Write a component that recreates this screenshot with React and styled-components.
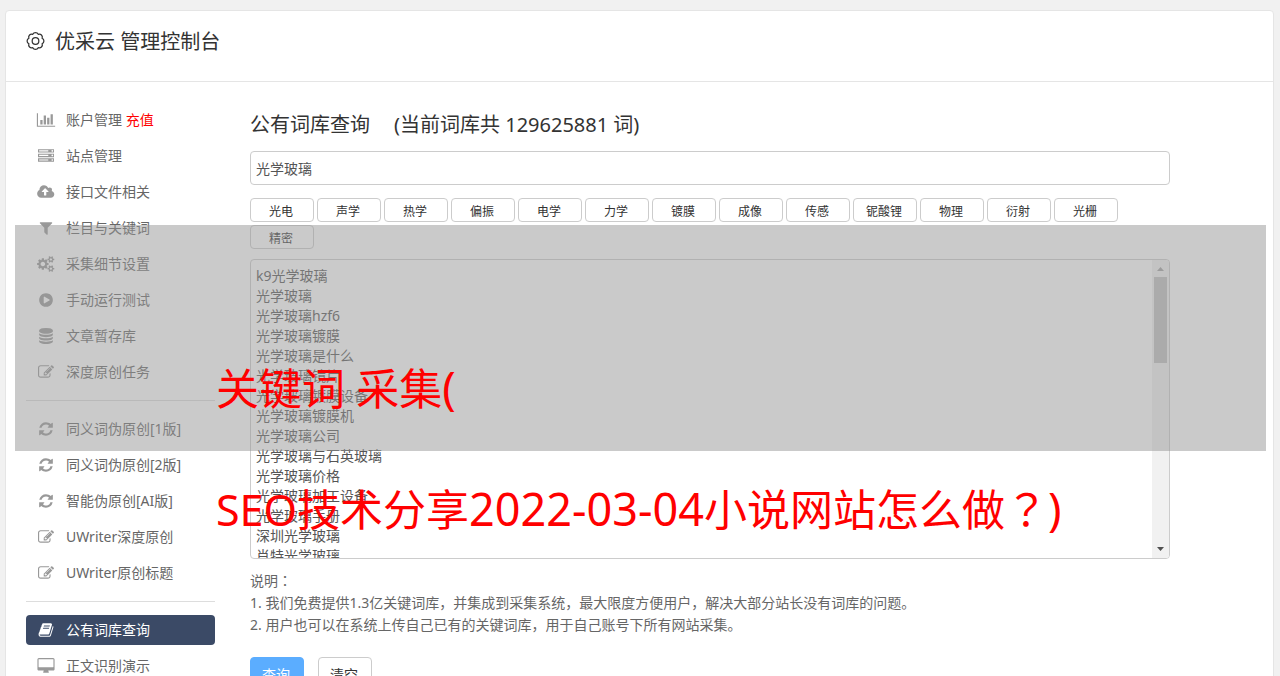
import React, { Fragment } from 'react';
import styled, { createGlobalStyle, css } from 'styled-components';

const FONT = '"Noto Sans", "Noto Sans CJK SC", sans-serif';
const BORDER = '#ccc';

const GlobalStyle = createGlobalStyle`
  * {
    box-sizing: border-box;
  }

  html {
    scrollbar-width: none;
  }

  body {
    margin: 0;
    background: #f1f1f1;
    color: #666;
    font-family: ${FONT};
    font-size: 14px;
  }
`;

const ICONS = {
  chart: {
    box: '0 0 2048 1792',
    d: 'M640 896v512h-256v-512h256zm384-512v1024h-256v-1024h256zm1024 1152v128h-2048v-1536h128v1408h1920zm-640-896v768h-256v-768h256zm384-384v1152h-256v-1152h256z',
  },
  server: {
    box: '0 0 1792 1792',
    d: 'M128 1408h1024v-128h-1024v128zm0-512h1024v-128h-1024v128zm1568 448q0-40-28-68t-68-28-68 28-28 68 28 68 68 28 68-28 28-68zm-1568-960h1024v-128h-1024v128zm1568 448q0-40-28-68t-68-28-68 28-28 68 28 68 68 28 68-28 28-68zm0-512q0-40-28-68t-68-28-68 28-28 68 28 68 68 28 68-28 28-68zm96 832v384h-1792v-384h1792zm0-512v384h-1792v-384h1792zm0-512v384h-1792v-384h1792z',
  },
  upload: {
    box: '-32 0 1920 1792',
    d: 'M1216 864q0-14-9-23l-352-352q-9-9-23-9t-23 9l-351 351q-10 12-10 24 0 14 9 23t23 9h224v352q0 13 9.5 22.5t22.5 9.5h192q13 0 22.5-9.5t9.5-22.5v-352h224q13 0 22.5-9.5t9.5-22.5zm640 288q0 159-112.5 271.5t-271.5 112.5h-1088q-185 0-316.5-131.5t-131.5-316.5q0-130 70-240t188-165q-2-30-2-43 0-212 150-362t362-150q156 0 285.5 87t188.5 231q71-62 166-62 106 0 181 75t75 181q0 76-41 138 130 31 213.5 135.5t83.5 238.5z',
  },
  filter: {
    box: '0 0 1792 1792',
    d: 'M1595 295q17 41-14 70l-493 493v742q0 42-39 59-13 5-25 5-27 0-45-19l-256-256q-19-19-19-45v-486l-493-493q-31-29-14-70 17-39 59-39h1280q42 0 59 39z',
  },
  cogs: {
    box: '-32 0 1920 1792',
    d: 'M832 896q0-106-75-181t-181-75-181 75-75 181 75 181 181 75 181-75 75-181zm768 512q0-52-38-90t-90-38-90 38-38 90q0 53 37.5 90.5t90.5 37.5 90.5-37.5 37.5-90.5zm0-1024q0-52-38-90t-90-38-90 38-38 90q0 53 37.5 90.5t90.5 37.5 90.5-37.5 37.5-90.5zm-384 421v185q0 10-7 19.5t-16 10.5l-155 24q-11 35-32 76 34 48 90 115 7 11 7 20 0 12-7 19-23 30-82.5 89.5t-78.5 59.5q-11 0-21-7l-115-90q-37 19-77 31-11 108-23 155-7 24-30 24h-186q-11 0-20-7.5t-10-17.5l-23-153q-34-10-75-31l-118 89q-7 7-20 7-11 0-21-8-144-133-144-160 0-9 7-19 10-14 41-53t47-61q-23-44-35-82l-152-24q-10-1-17-9.5t-7-19.5v-185q0-10 7-19.5t16-10.5l155-24q11-35 32-76-34-48-90-115-7-11-7-20 0-12 7-20 22-30 82-89t79-59q11 0 21 7l115 90q34-18 77-32 11-108 23-154 7-24 30-24h186q11 0 20 7.5t10 17.5l23 153q34 10 75 31l118-89q8-7 20-7 11 0 21 8 144 133 144 160 0 8-7 19-12 16-42 54t-45 60q23 48 34 82l152 23q10 2 17 10.5t7 19.5zm640 533v140q0 16-149 31-12 27-30 52 51 113 51 138 0 4-4 7-122 71-124 71-8 0-46-47t-52-68q-20 2-30 2t-30-2q-14 21-52 68t-46 47q-2 0-124-71-4-3-4-7 0-25 51-138-18-25-30-52-149-15-149-31v-140q0-16 149-31 13-29 30-52-51-113-51-138 0-4 4-7 4-2 35-20t59-34 30-16q8 0 46 46.5t52 67.5q20-2 30-2t30 2q51-71 92-112l6-2q4 0 124 70 4 3 4 7 0 25-51 138 17 23 30 52 149 15 149 31zm0-1024v140q0 16-149 31-12 27-30 52 51 113 51 138 0 4-4 7-122 71-124 71-8 0-46-47t-52-68q-20 2-30 2t-30-2q-14 21-52 68t-46 47q-2 0-124-71-4-3-4-7 0-25 51-138-18-25-30-52-149-15-149-31v-140q0-16 149-31 13-29 30-52-51-113-51-138 0-4 4-7 4-2 35-20t59-34 30-16q8 0 46 46.5t52 67.5q20-2 30-2t30 2q51-71 92-112l6-2q4 0 124 70 4 3 4 7 0 25-51 138 17 23 30 52 149 15 149 31z',
  },
  play: {
    box: '0 0 1792 1792',
    d: 'M896 128q209 0 385.5 103t279.5 279.5 103 385.5-103 385.5-279.5 279.5-385.5 103-385.5-103-279.5-279.5-103-385.5 103-385.5 279.5-279.5 385.5-103zm384 823q32-18 32-55t-32-55l-544-320q-31-19-64-1-32 19-32 56v640q0 37 32 56 16 8 32 8 17 0 32-9z',
  },
  database: {
    box: '0 0 1792 1792',
    d: 'M896 768q237 0 443-43t325-127v170q0 69-103 128t-280 93.5-385 34.5-385-34.5-280-93.5-103-128v-170q119 84 325 127t443 43zm0 768q237 0 443-43t325-127v170q0 69-103 128t-280 93.5-385 34.5-385-34.5-280-93.5-103-128v-170q119 84 325 127t443 43zm0-384q237 0 443-43t325-127v170q0 69-103 128t-280 93.5-385 34.5-385-34.5-280-93.5-103-128v-170q119 84 325 127t443 43zm0-1152q208 0 385 34.5t280 93.5 103 128v128q0 69-103 128t-280 93.5-385 34.5-385-34.5-280-93.5-103-128v-128q0-69 103-128t280-93.5 385-34.5z',
  },
  edit: {
    box: '0 0 1792 1792',
    d: 'M888 1184l116-116-152-152-116 116v56h96v96h56zm440-720q-16-16-33 1l-350 350q-17 17-1 33t33-1l350-350q17-17 1-33zm80 594v190q0 119-84.5 203.5t-203.5 84.5h-832q-119 0-203.5-84.5t-84.5-203.5v-832q0-119 84.5-203.5t203.5-84.5h832q63 0 117 25 15 7 18 23 3 17-9 29l-49 49q-14 14-32 8-23-6-45-6h-832q-66 0-113 47t-47 113v832q0 66 47 113t113 47h832q66 0 113-47t47-113v-126q0-13 9-22l64-64q15-15 35-7t20 29zm-96-738l288 288-672 672h-288v-288zm444 132l-92 92-288-288 92-92q28-28 68-28t68 28l152 152q28 28 28 68t-28 68z',
  },
  refresh: {
    box: '0 0 1792 1792',
    d: 'M1639 1056q0 5-1 7-64 268-268 434.5t-478 166.5q-146 0-282.5-55t-243.5-157l-129 129q-19 19-45 19t-45-19-19-45v-448q0-26 19-45t45-19h448q26 0 45 19t19 45-19 45l-137 137q71 66 161 102t187 36q134 0 250-65t186-179q11-17 53-117 8-23 30-23h192q13 0 22.5 9.5t9.5 22.5zm25-800v448q0 26-19 45t-45 19h-448q-26 0-45-19t-19-45 19-45l138-138q-148-137-349-137-134 0-250 65t-186 179q-11 17-53 117-8 23-30 23h-199q-13 0-22.5-9.5t-9.5-22.5v-7q65-268 270-434.5t480-166.5q146 0 284 55.5t245 156.5l130-129q19-19 45-19t45 19 19 45z',
  },
  book: {
    box: '0 0 1792 1792',
    d: 'M1703 478q40 57 18 129l-275 906q-19 64-76.5 107.5t-122.5 43.5h-923q-77 0-148.5-53.5t-99.5-131.5q-24-67-2-127 0-4 3-27t4-37q1-8-3-21.5t-3-19.5q2-11 8-21t16.5-23.5 16.5-23.5q23-38 45-91.5t30-91.5q3-10 .5-30t-.5-28q3-11 17-28t17-23q21-36 42-92t25-90q1-9-2.5-32t.5-28q4-13 22-30.5t22-22.5q19-26 42.5-84.5t27.5-96.5q1-8-3-25.5t-2-26.5q2-8 9-18t18-23 17-21q8-12 16.5-30.5t15-35 16-36 19.5-32 26.5-23.5 36-11.5 47.5 5.5l-1 3q38-9 51-9h761q74 0 114 56t18 130l-274 906q-36 119-71.5 153.5t-128.5 34.5h-869q-27 0-38 15-11 16-1 43 24 70 144 70h923q29 0 56-15.5t35-41.5l300-987q7-22 5-57 38 15 59 43zm-1064 2q-4 13 2 22.5t20 9.5h608q13 0 25.5-9.5t16.5-22.5l21-64q4-13-2-22.5t-20-9.5h-608q-13 0-25.5 9.5t-16.5 22.5zm-83 256q-4 13 2 22.5t20 9.5h608q13 0 25.5-9.5t16.5-22.5l21-64q4-13-2-22.5t-20-9.5h-608q-13 0-25.5 9.5t-16.5 22.5z',
  },
  desktop: {
    box: '-64 0 1920 1792',
    d: 'M1728 992v-832q0-13-9.5-22.5t-22.5-9.5h-1600q-13 0-22.5 9.5t-9.5 22.5v832q0 13 9.5 22.5t22.5 9.5h1600q13 0 22.5-9.5t9.5-22.5zm128-832v1088q0 66-47 113t-113 47h-544q0 37 16 77.5t32 71 16 43.5q0 26-19 45t-45 19h-512q-26 0-45-19t-19-45q0-14 16-44t32-70 16-78h-544q-66 0-113-47t-47-113v-1088q0-66 47-113t113-47h1600q66 0 113 47t47 113z',
  },
};

const MENU = [
  [
    { icon: 'chart', text: '账户管理', extra: '充值' },
    { icon: 'server', text: '站点管理' },
    { icon: 'upload', text: '接口文件相关' },
    { icon: 'filter', text: '栏目与关键词' },
    { icon: 'cogs', text: '采集细节设置' },
    { icon: 'play', text: '手动运行测试' },
    { icon: 'database', text: '文章暂存库' },
    { icon: 'edit', text: '深度原创任务' },
  ],
  [
    { icon: 'refresh', text: '同义词伪原创[1版]' },
    { icon: 'refresh', text: '同义词伪原创[2版]' },
    { icon: 'refresh', text: '智能伪原创[AI版]' },
    { icon: 'edit', text: 'UWriter深度原创' },
    { icon: 'edit', text: 'UWriter原创标题' },
  ],
  [
    { icon: 'book', text: '公有词库查询', active: true },
    { icon: 'desktop', text: '正文识别演示' },
  ],
];

const TAGS = [
  '光电', '声学', '热学', '偏振', '电学', '力学', '镀膜',
  '成像', '传感', '铌酸锂', '物理', '衍射', '光栅', '精密',
];

const WORDS = [
  'k9光学玻璃',
  '光学玻璃',
  '光学玻璃hzf6',
  '光学玻璃镀膜',
  '光学玻璃是什么',
  '光学玻璃镜片',
  '光学玻璃镀膜设备',
  '光学玻璃镀膜机',
  '光学玻璃公司',
  '光学玻璃与石英玻璃',
  '光学玻璃价格',
  '光学玻璃加工设备',
  '光学玻璃手册',
  '深圳光学玻璃',
  '肖特光学玻璃',
];

const Card = styled.div`
  margin: 10px 6px 0 5px;
  border: 1px solid #e5e5e5;
  border-radius: 4px;
  background: #fff;
`;

const Header = styled.header`
  display: flex;
  align-items: flex-start;
  gap: 10px;
  height: 71px;
  padding: 15px 20px;
  border-bottom: 1px solid #e5e5e5;
  color: #333;
`;

const GearIcon = styled.svg`
  width: 19px;
  height: 30px;
  fill: none;
  stroke: #333;
  stroke-width: 1.3;
`;

const HeaderTitle = styled.h1`
  margin: 0;
  font-size: 20px;
  font-weight: 400;
  line-height: 32px;
`;

const Body = styled.div`
  display: flex;
  gap: 35px;
  padding: 23px 103px 30px 20px;
`;

const Sidebar = styled.nav`
  flex: 0 0 189px;
`;

const MenuLink = styled.a`
  display: flex;
  align-items: center;
  gap: 10px;
  height: 30px;
  margin-bottom: 6px;
  padding-left: 10px;
  border-radius: 4px;
  color: #666;
  line-height: 20px;
  text-decoration: none;

  ${({ $active }) => $active && css`
    background: #3b4a66;
    color: #fff;
  `}
`;

const MenuIcon = styled.svg`
  width: 20px;
  height: 16px;
  fill: ${({ $active }) => ($active ? '#fff' : '#999')};
`;

const Recharge = styled.span`
  color: #f00;
`;

const Divider = styled.hr`
  height: 1px;
  margin: 13px 0;
  border: 0;
  background: #ddd;
`;

const Main = styled.main`
  flex: 1;
  min-width: 0;
`;

const Title = styled.h2`
  display: flex;
  gap: 24px;
  margin: 5px 0 11px;
  color: #333;
  font-size: 20px;
  font-weight: 400;
  line-height: 30px;
`;

const field = css`
  border: 1px solid ${BORDER};
  border-radius: 4px;
  background: #fff;
`;

const SearchInput = styled.input`
  ${field}
  display: block;
  width: 100%;
  height: 34px;
  padding: 0 5px;
  color: #555;
  font-family: ${FONT};
  font-size: 14px;
`;

const Tags = styled.div`
  display: flex;
  flex-wrap: wrap;
  gap: 3px;
  margin: 13px 0 10px;
`;

const Tag = styled.button`
  ${field}
  width: 64px;
  height: 24px;
  padding: 3px 2px 0 0;
  color: #333;
  font-family: ${FONT};
  font-size: 12px;
  line-height: 18px;
`;

const ListBox = styled.div`
  ${field}
  display: flex;
  height: 300px;
  overflow: hidden;
`;

const WordArea = styled.textarea`
  flex: 1;
  padding: 6px 5px;
  border: 0;
  outline: 0;
  background: transparent;
  color: #555;
  font-family: ${FONT};
  font-size: 14px;
  line-height: 20px;
  resize: none;
  scrollbar-width: none;
`;

const ScrollTrack = styled.div`
  display: flex;
  flex-direction: column;
  align-items: center;
  gap: 6px;
  width: 17px;
  padding: 7px 0;
  background: #f1f1f1;
`;

const ScrollThumb = styled.div`
  width: 13px;
  height: 86px;
  background: #c1c1c1;
`;

const Arrow = styled.svg`
  flex: none;
  width: 7px;
  height: 4px;
  margin-top: ${({ $end }) => ($end ? 'auto' : '0')};
  fill: ${({ $end }) => ($end ? '#505050' : '#a3a3a3')};
`;

const Notes = styled.div`
  margin-top: 10px;
  line-height: 22px;
`;

const Note = styled.p`
  margin: 0;
`;

/* full-width marks drawn in the middle of their square */
const Mark = styled.span`
  font-family: "Noto Sans CJK TC", sans-serif;
`;

const Actions = styled.div`
  display: flex;
  gap: 14px;
  margin-top: 21px;
`;

const ActionButton = styled.button`
  width: 54px;
  height: 34px;
  padding: 0 2px 0 0;
  border: 1px solid ${({ $primary }) => ($primary ? '#5badff' : BORDER)};
  border-radius: 4px;
  background: ${({ $primary }) => ($primary ? '#5badff' : '#fff')};
  color: ${({ $primary }) => ($primary ? '#fff' : '#333')};
  font-family: ${FONT};
  font-size: 14px;
`;

/* translucent band with the headline laid over the whole page */
const Banner = styled.div`
  position: absolute;
  top: 225px;
  left: 15px;
  right: 14px;
  height: 226px;
  padding: 133px 0 0 201px;
  background: rgba(150, 150, 150, 0.5);
  pointer-events: none;
`;

const BannerLine = styled.p`
  margin: 0 0 58px;
  color: #f00;
  font-size: 43px;
  line-height: 60px;
  white-space: nowrap;
`;

const Latin = styled.span`
  font-size: 45px;
`;

const Icon = ({ name, active }) => (
  <MenuIcon viewBox={ICONS[name].box} $active={active} aria-hidden="true">
    <path d={ICONS[name].d} />
  </MenuIcon>
);

const MenuItem = ({
  icon, text, extra, active,
}) => (
  <MenuLink href="#" $active={active}>
    <Icon name={icon} active={active} />
    <span>
      {text}
      {extra && <Recharge>{` ${extra}`}</Recharge>}
    </span>
  </MenuLink>
);

const Gear = () => (
  <GearIcon viewBox="0 0 20 20" aria-hidden="true">
    <path d="M17 7.1A3.2 3.2 0 0 1 17 12.9A3.2 3.2 0 0 1 12.9 17A3.2 3.2 0 0 1 7.1 17A3.2 3.2 0 0 1 3 12.9A3.2 3.2 0 0 1 3 7.1A3.2 3.2 0 0 1 7.1 3A3.2 3.2 0 0 1 12.9 3A3.2 3.2 0 0 1 17 7.1Z" />
    <circle cx="10" cy="10" r="3.5" />
  </GearIcon>
);

const WordList = () => (
  <ListBox>
    <WordArea aria-label="词库结果" defaultValue={WORDS.join('\n')} />
    <ScrollTrack>
      <Arrow viewBox="0 0 7 4"><path d="M0 4L3.5 0L7 4Z" /></Arrow>
      <ScrollThumb />
      <Arrow viewBox="0 0 7 4" $end><path d="M0 0L3.5 4L7 0Z" /></Arrow>
    </ScrollTrack>
  </ListBox>
);

const App = () => (
  <Fragment>
    <GlobalStyle />
    <Card>
      <Header>
        <Gear />
        <HeaderTitle>优采云 管理控制台</HeaderTitle>
      </Header>
      <Body>
        <Sidebar>
          {MENU.map((group, idx) => (
            <Fragment key={group[0].text}>
              {idx > 0 && <Divider />}
              {group.map(item => <MenuItem key={item.text} {...item} />)}
            </Fragment>
          ))}
        </Sidebar>
        <Main>
          <Title>
            <span>公有词库查询</span>
            <span>(当前词库共 129625881 词)</span>
          </Title>
          <SearchInput type="text" aria-label="关键词" defaultValue="光学玻璃" />
          <Tags>
            {TAGS.map(tag => <Tag key={tag} type="button">{tag}</Tag>)}
          </Tags>
          <WordList />
          <Notes>
            <Note>
              说明
              <Mark>：</Mark>
            </Note>
            <Note>1. 我们免费提供1.3亿关键词库，并集成到采集系统，最大限度方便用户，解决大部分站长没有词库的问题。</Note>
            <Note>2. 用户也可以在系统上传自己已有的关键词库，用于自己账号下所有网站采集。</Note>
          </Notes>
          <Actions>
            <ActionButton type="button" $primary>查询</ActionButton>
            <ActionButton type="button">清空</ActionButton>
          </Actions>
        </Main>
      </Body>
    </Card>
    <Banner>
      <BannerLine>
        关键词 采集
        <Latin>(</Latin>
      </BannerLine>
      <BannerLine>
        SEO技术分享
        <Latin>2022-03-04</Latin>
        小说网站怎么做
        <Mark>？</Mark>
        <Latin>)</Latin>
      </BannerLine>
    </Banner>
  </Fragment>
);

export default App;
